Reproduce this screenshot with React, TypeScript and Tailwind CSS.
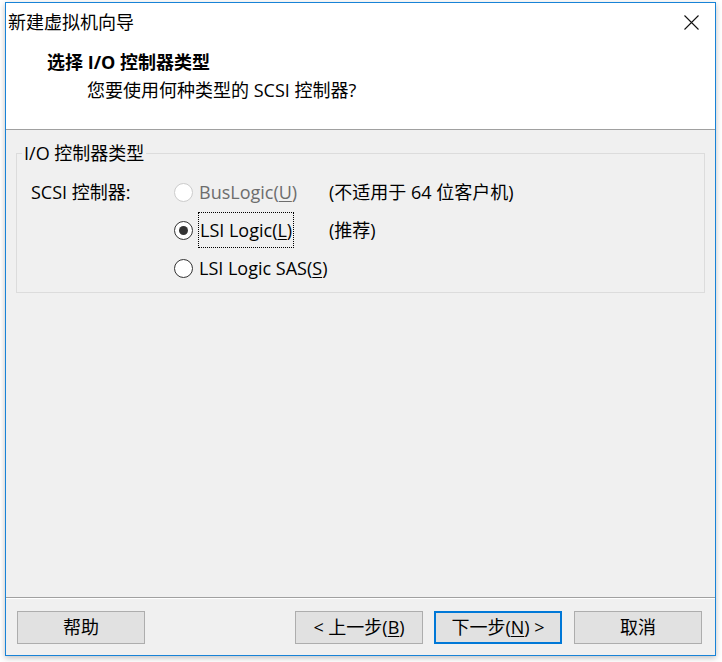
import React from "react";

const font = "font-['Open_Sans','Noto_Sans_CJK_SC',sans-serif]";

function Radio({ checked, disabled }: { checked?: boolean; disabled?: boolean }) {
  return (
    <span
      className={`flex h-[19px] w-[19px] shrink-0 items-center justify-center rounded-full border bg-white ${
        disabled ? "border-[#cccccc]" : "border-[#333333]"
      }`}
    >
      {checked && <span className="h-[9px] w-[9px] rounded-full bg-[#333333]" />}
    </span>
  );
}

function Button({ children, primary }: { children: React.ReactNode; primary?: boolean }) {
  return (
    <div
      className={`flex h-[33px] w-[128px] items-center justify-center bg-[#e1e1e1] text-[18px] ${
        primary ? "border-2 border-[#0078d7]" : "border border-[#adadad]"
      }`}
    >
      {children}
    </div>
  );
}

export default function App() {
  return (
    <div className={`h-[662px] w-[722px] bg-white pl-[5px] pt-[2px] text-black ${font}`}>
      <div className="flex h-[654px] w-[711px] flex-col border border-[#1883d7] bg-[#f0f0f0] shadow-[0_2px_6px_rgba(0,0,0,0.25)]">
        {/* header */}
        <div className="h-[127px] border-b border-[#a0a0a0] bg-white">
          <div className="flex h-[38px] items-center justify-between pl-[2px] pr-[16px]">
            <span className="text-[18px] leading-none">新建虚拟机向导</span>
            <svg width="15" height="15" viewBox="0 0 15 15" className="shrink-0">
              <path d="M0.5 0.5L14.5 14.5M14.5 0.5L0.5 14.5" stroke="#111" strokeWidth="1.1" />
            </svg>
          </div>
          <div className="pl-[41px] pt-[10px] text-[18px] font-bold leading-[22px]">选择 I/O 控制器类型</div>
          <div className="pl-[81px] pt-[6px] text-[18px] leading-[22px]">您要使用何种类型的 SCSI 控制器?</div>
        </div>

        {/* body */}
        <div className="flex-1 pl-[10px] pt-[23px]">
          <div className="relative h-[140px] w-[689px] border border-[#dcdcdc]">
            <span className="absolute left-[5px] top-[-13px] bg-[#f0f0f0] px-[2px] text-[18px] leading-[24px]">
              I/O 控制器类型
            </span>
            <div className="flex pl-[14px] pt-[26px] text-[18px] leading-[24px]">
              <div className="w-[143px]">SCSI 控制器:</div>
              <div className="flex flex-col gap-[14px]">
                <div className="flex h-[24px] items-center">
                  <Radio disabled />
                  <span className="ml-[6px] w-[130px] text-[#6d6d6d]">
                    BusLogic(<span className="underline underline-offset-2">U</span>)
                  </span>
                  <span>(不适用于 64 位客户机)</span>
                </div>
                <div className="flex h-[24px] items-center">
                  <Radio checked />
                  <span className="ml-[5px] w-[131px]">
                    <span className="border border-dotted border-black px-[1px] py-[5px]">
                      LSI Logic(<span className="underline underline-offset-2">L</span>)
                    </span>
                  </span>
                  <span>(推荐)</span>
                </div>
                <div className="flex h-[24px] items-center">
                  <Radio />
                  <span className="ml-[6px]">
                    LSI Logic SAS(<span className="underline underline-offset-2">S</span>)
                  </span>
                </div>
              </div>
            </div>
          </div>
        </div>

        {/* footer */}
        <div className="h-[58px] border-t border-[#a0a0a0] shadow-[inset_0_1px_0_#ffffff]">
          <div className="flex pl-[11px] pt-[13px]">
            <Button>帮助</Button>
            <div className="ml-[150px]">
              <Button>
                &lt; 上一步(<span className="underline underline-offset-2">B</span>)
              </Button>
            </div>
            <div className="ml-[11px]">
              <Button primary>
                下一步(<span className="underline underline-offset-2">N</span>) &gt;
              </Button>
            </div>
            <div className="ml-[12px]">
              <Button>取消</Button>
            </div>
          </div>
        </div>
      </div>
    </div>
  );
}
